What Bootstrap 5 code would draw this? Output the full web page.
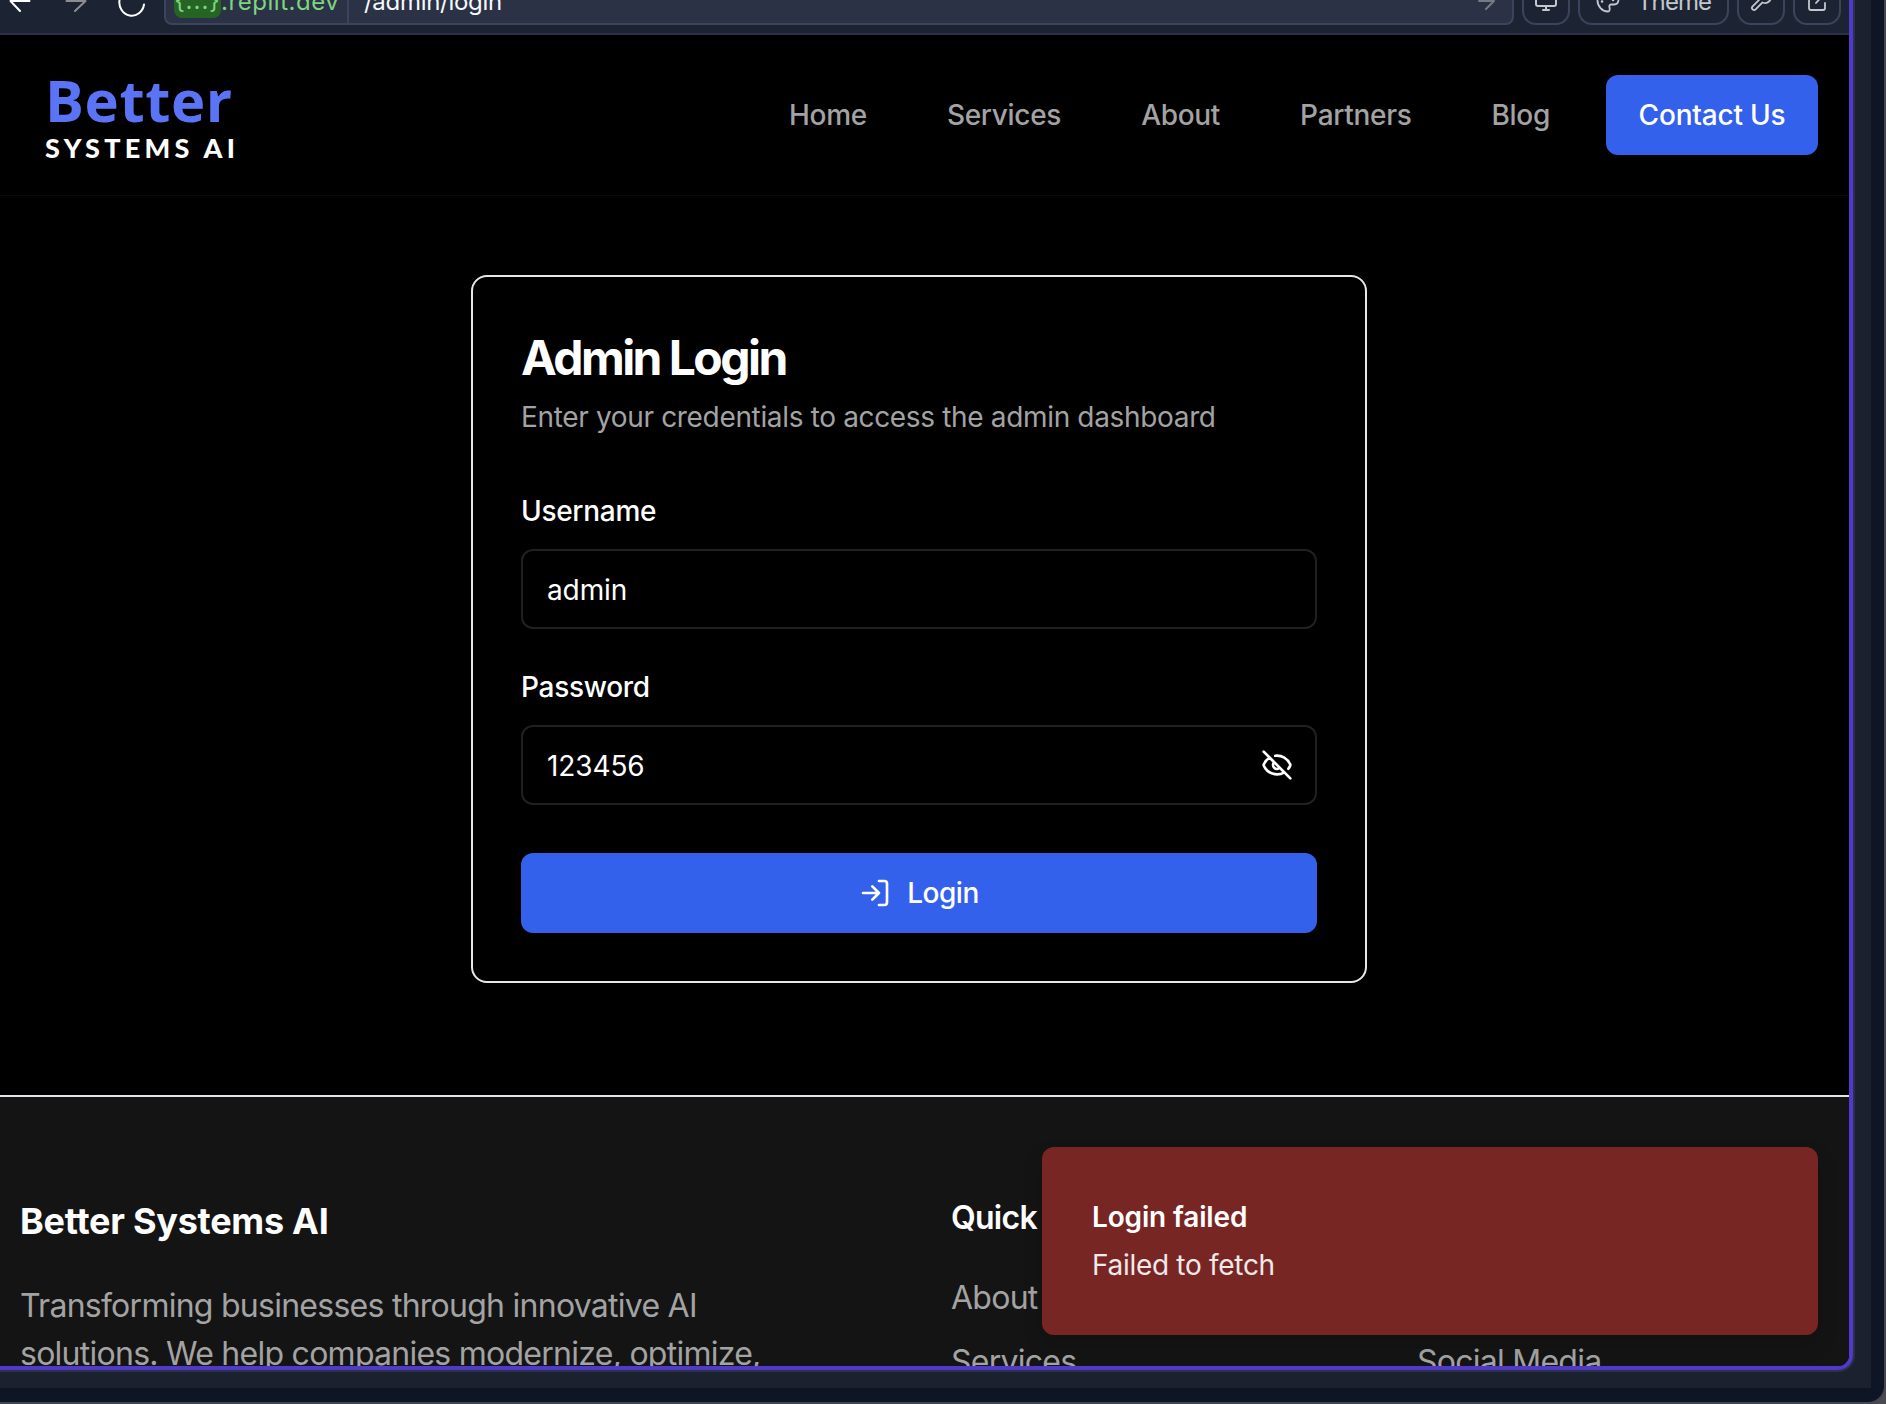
<!DOCTYPE html>
<html lang="en">
<head>
<meta charset="utf-8">
<meta name="viewport" content="width=device-width, initial-scale=1">
<title>Admin Login</title>
<link href="https://cdn.jsdelivr.net/npm/bootstrap@5.3.0/dist/css/bootstrap.min.css" rel="stylesheet">
<style>
body{background:#4a4a50;font-family:Inter,"Liberation Sans",sans-serif;font-size:28px;line-height:40px;letter-spacing:-.3px;color:#fff;overflow:hidden}
svg{fill:none;stroke:currentColor;stroke-linecap:round;stroke-linejoin:round;flex:none;display:block}
.app-window{width:1886px;height:1404px;background:#0e1525;border:solid #45464f;border-width:0 2px 2px 0;border-bottom-right-radius:18px}
.pane{width:1871px;height:1388px;background:#1c2130}
.pane-edge{width:1855px;height:1372px;border:solid #2b3245;border-width:0 2px 2px 0;border-bottom-right-radius:17px;background:#2b3245}
.viewport{height:1370px;border:solid #5039cb;border-width:0 4px 4px 0;border-bottom-right-radius:15px;background:#000}
.toolbar{height:35px;background:#1c2333;border-bottom:2px solid #2b3245;padding:0 8px 8px 0;font-size:24px;line-height:36px}
.nav-icons{width:164px;height:25px}
.address{height:48px;background:#2b3245;border:2px solid #3c445c;border-radius:8px;margin-right:8px}
.host{width:183px;height:44px;border-right:2px solid #3c445c;color:#7fd480;padding-left:8px}
.host-name{padding-top:2px;letter-spacing:.55px}
.token{background:#266426;border-radius:8px;width:47px;height:34px;line-height:34px;text-align:center;letter-spacing:1px}
.route{padding:2px 0 0 15px;color:#f5f9fc}
.go{color:#757b84;margin-right:16px}
.tool{height:48px;width:48px;border:2px solid #3c445c;border-radius:14px;color:#c2c8cc;margin-right:8px}
.tool-theme{width:151px;padding-left:16px;gap:17px;letter-spacing:-.9px}
.tool-theme span{padding-top:2px}
.site-header{height:161px;padding:3px 31px 0 45px;border-bottom:1px solid #0a0a0a}
.brand-top{font:700 58px/58px "Open Sans",sans-serif;color:#5b74f6;letter-spacing:.6px;padding-top:1px}
.brand-sub{font:900 27px/32px Lato,sans-serif;letter-spacing:4.300px;padding-top:3px}
.menu{margin-top:-4px}
.site-nav{gap:80px;font-weight:500}
.site-nav a{color:#a3a3a3;text-decoration:none}
.btn-main{background:#3461eb;color:#fff;height:80px;border-radius:12px;font-size:28px;font-weight:500;border:0;letter-spacing:-.5px}
.btn-main:hover{background:#2f58d6;color:#fff}
.contact{width:212px;margin-left:56px;padding:0;letter-spacing:-.2px}
.main-area{height:899px;padding-top:79px;padding-right:11px}
.login-card{width:896px;height:708px;background:#000;color:#fff;border:2px solid #e5e7eb;border-radius:16px;padding:48px}
.login-title{font-size:48px;line-height:48px;font-weight:700;letter-spacing:-2.550px;margin:9px 0 15px}
.muted-text{color:#a3a3a3}
.lead-in{letter-spacing:-.34px}
.field-label{font-weight:500;line-height:28px;margin:0 0 24px}
.group-first{margin-top:60px}
.group-next{margin-top:44px}
.field{height:80px;border:2px solid #202020;border-radius:12px;background:#000;color:#fff;font-size:28px;padding:2px 24px 0;letter-spacing:-.1px}
.field:focus{background:#000;color:#fff}
.eye-btn{right:24px;top:24px}
.site-footer{height:271px;border-top:2px solid #e5e2ea;background:#141414;padding:0 20px;font-size:32px;line-height:48px;letter-spacing:-.74px}
.foot-about{width:931px;padding-top:100px}
.foot-col{width:466px;padding-top:97px}
.foot-col h4{font-size:32px;line-height:48px;font-weight:600;margin:0 0 32px}
.foot-about h3{font-size:36px;line-height:48px;font-weight:700;margin:0 0 37px;letter-spacing:-.25px}
.foot-col a{color:#a3a3a3;text-decoration:none;display:block;margin-bottom:16px;white-space:nowrap}
.foot-social{padding-top:241px}
.alert-toast{right:31px;top:1147px;width:776px;height:188px;border-radius:12px;background:#782624;padding:50px;box-shadow:0 10px 20px rgba(0,0,0,.15)}
.toast-title{letter-spacing:-.15px}
.toast-note{color:#f1e9e9}
</style>
</head>
<body>
<div class="app-window"><div class="pane"><div class="pane-edge">
<div class="viewport position-relative overflow-hidden d-flex flex-column">
  <div class="toolbar d-flex align-items-end overflow-hidden flex-shrink-0">
    <div class="nav-icons flex-shrink-0">
      <svg width="164" height="25" stroke-width="2"><path d="M29.500 1H10.500M10.500 1l9.500 10"/><path d="M66.500 1h19L75 11" stroke="#8b8d90"/><path d="M119.500 0a12 13 0 0 0 24.500 4.500"/></svg>
    </div>
    <div class="address d-flex flex-grow-1 align-items-center">
      <div class="host d-flex align-items-center"><span class="token">{...}</span><span class="host-name">.replit.dev</span></div>
      <div class="route flex-grow-1">/admin/login</div>
      <svg class="go" width="18" height="18" stroke-width="2"><path d="M1 9h15M8 1l8 8-8 8"/></svg>
    </div>
    <div class="tool d-flex align-items-center justify-content-center"><svg width="24" height="24" stroke-width="2"><rect x="2" y="2" width="20" height="15" rx="2"/><path d="M12 17v4M9 21h6"/></svg></div>
    <div class="tool tool-theme d-flex align-items-center"><svg width="24" height="24" stroke-width="1.800"><path d="M12 22.500C6 22.500 1.500 17 1.500 11.500S6 1.500 12 1.500s10.500 4 10.500 9c0 3.500-2 5-4.500 5h-2.500c-2 0-2.500 1.500-2 3 .5 2 0 4-1.500 4z"/><path d="M6 12.500h.1M12 6h.1M17 11h.1M7 8h.1" stroke-width="2.500"/></svg><span>Theme</span></div>
    <div class="tool d-flex align-items-center justify-content-center"><svg width="24" height="24" stroke-width="1.800"><path d="M14.700 6.300a1 1 0 0 0 0 1.400l1.600 1.600a1 1 0 0 0 1.400 0l3.770-3.770a6 6 0 0 1-7.940 7.940l-6.910 6.910a2.120 2.120 0 0 1-3-3l6.910-6.910a6 6 0 0 1 7.940-7.940l-3.760 3.760z"/></svg></div>
    <div class="tool me-0 d-flex align-items-center justify-content-center"><svg width="24" height="24" stroke-width="1.800"><path d="M10 5H6a2 2 0 0 0-2 2v12a2 2 0 0 0 2 2h12a2 2 0 0 0 2-2v-5M14 3h7v7M21 3l-10 11"/></svg></div>
  </div>

  <header class="site-header d-flex align-items-center justify-content-between flex-shrink-0">
    <div class="brand"><div class="brand-top">Better</div><div class="brand-sub">SYSTEMS AI</div></div>
    <div class="menu d-flex align-items-center">
      <nav class="site-nav d-flex"><a href="#">Home</a><a href="#">Services</a><a href="#">About</a><a href="#">Partners</a><a href="#">Blog</a></nav>
      <button class="btn btn-main contact">Contact Us</button>
    </div>
  </header>

  <main class="main-area d-flex justify-content-center align-items-start flex-shrink-0">
    <form class="login-card card">
      <h1 class="login-title">Admin Login</h1>
      <p class="muted-text lead-in mb-0">Enter your credentials to access the admin dashboard</p>
      <div class="group-first">
        <label class="field-label d-block" for="user">Username</label>
        <input class="form-control field" id="user" value="admin">
      </div>
      <div class="group-next">
        <label class="field-label d-block" for="pass">Password</label>
        <div class="position-relative">
          <input class="form-control field" id="pass" value="123456">
          <svg class="position-absolute eye-btn" width="32" height="32" viewBox="0 0 24 24" stroke-width="2"><path d="M10.730 5.080a10.740 10.740 0 0 1 11.210 6.570 1 1 0 0 1 0 .7 10.750 10.750 0 0 1-1.440 2.490M14.080 14.160a3 3 0 0 1-4.240-4.240M17.480 17.500a10.750 10.750 0 0 1-15.420-5.150 1 1 0 0 1 0-.7 10.750 10.750 0 0 1 4.450-5.140M2 2l20 20"/></svg>
        </div>
      </div>
      <button type="button" class="btn btn-main w-100 mt-5 d-flex align-items-center justify-content-center gap-3"><svg width="32" height="32" viewBox="0 0 24 24" stroke-width="2"><path d="M15 3h4a2 2 0 0 1 2 2v14a2 2 0 0 1-2 2h-4M10 17l5-5-5-5M15 12H3"/></svg>Login</button>
    </form>
  </main>

  <footer class="site-footer d-flex flex-shrink-0 overflow-hidden">
    <div class="foot-about flex-shrink-0"><h3>Better Systems AI</h3><p class="muted-text">Transforming businesses through innovative AI<br>solutions. We help companies modernize, optimize,</p></div>
    <div class="foot-col flex-shrink-0"><h4>Quick</h4><a href="#">About</a><a href="#">Services</a></div>
    <div class="foot-col foot-social"><a href="#">Social Media</a></div>
  </footer>

  <div class="alert-toast position-absolute">
    <div class="fw-semibold toast-title">Login failed</div>
    <div class="mt-2 toast-note">Failed to fetch</div>
  </div>
</div>
</div></div></div>
<script src="https://cdn.jsdelivr.net/npm/bootstrap@5.3.0/dist/js/bootstrap.bundle.min.js"></script>
</body>
</html>
